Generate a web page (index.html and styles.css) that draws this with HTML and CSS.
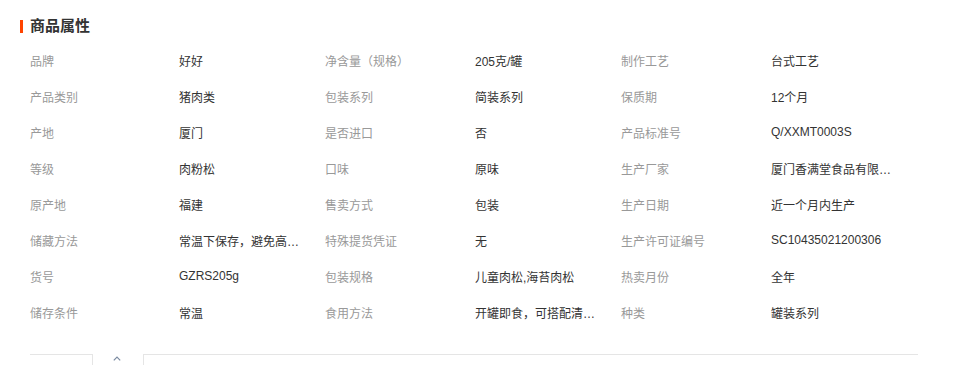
FILE: index.html
```html
<!DOCTYPE html>
<html lang="zh-CN">
<head>
<meta charset="utf-8">
<title>商品属性</title>
<link rel="stylesheet" href="styles.css">
</head>
<body>
<div class="panel">
  <h2 class="title"><span class="bar"></span>商品属性</h2>
  <div class="attrs">
    <div class="k">品牌</div><div class="v">好好</div>
    <div class="k">净含量（规格）</div><div class="v">205克/罐</div>
    <div class="k">制作工艺</div><div class="v">台式工艺</div>

    <div class="k">产品类别</div><div class="v">猪肉类</div>
    <div class="k">包装系列</div><div class="v">简装系列</div>
    <div class="k">保质期</div><div class="v">12个月</div>

    <div class="k">产地</div><div class="v">厦门</div>
    <div class="k">是否进口</div><div class="v">否</div>
    <div class="k">产品标准号</div><div class="v">Q/XXMT0003S</div>

    <div class="k">等级</div><div class="v">肉粉松</div>
    <div class="k">口味</div><div class="v">原味</div>
    <div class="k">生产厂家</div><div class="v">厦门香满堂食品有限…</div>

    <div class="k">原产地</div><div class="v">福建</div>
    <div class="k">售卖方式</div><div class="v">包装</div>
    <div class="k">生产日期</div><div class="v">近一个月内生产</div>

    <div class="k">储藏方法</div><div class="v">常温下保存，避免高…</div>
    <div class="k">特殊提货凭证</div><div class="v">无</div>
    <div class="k">生产许可证编号</div><div class="v">SC10435021200306</div>

    <div class="k">货号</div><div class="v">GZRS205g</div>
    <div class="k">包装规格</div><div class="v">儿童肉松,海苔肉松</div>
    <div class="k">热卖月份</div><div class="v">全年</div>

    <div class="k">储存条件</div><div class="v">常温</div>
    <div class="k">食用方法</div><div class="v">开罐即食，可搭配清…</div>
    <div class="k">种类</div><div class="v">罐装系列</div>
  </div>
  <div class="foot">
    <div class="seg left"></div>
    <div class="toggle">
      <svg width="8" height="5" viewBox="0 0 8 5"><path d="M0.8 4.4 L4 1.2 L7.2 4.4" fill="none" stroke="#7a8aa0" stroke-width="1.2"/></svg>
    </div>
    <div class="seg right"></div>
  </div>
</div>
</body>
</html>
```

FILE: styles.css
```css
html, body {
  margin: 0;
  padding: 0;
  background: #fff;
}
body {
  font-family: "Liberation Sans", "Noto Sans CJK SC", sans-serif;
  font-size: 12px;
  color: #333;
}
.panel {
  padding: 17px 37px 0 20px;
}
.title {
  margin: 0;
  display: flex;
  align-items: center;
  gap: 7px;
  height: 18px;
  font-size: 15px;
  font-weight: bold;
  color: #333;
  line-height: 18px;
}
.bar {
  display: block;
  width: 3px;
  height: 13px;
  background: #ff4400;
}
.attrs {
  margin-top: 7px;
  margin-left: 10px;
  display: grid;
  grid-template-columns: 149px 146px 150px 146px 150px 1fr;
  grid-auto-rows: 36px;
  align-items: center;
}
.k {
  color: #999;
  white-space: nowrap;
}
.v {
  color: #333;
  white-space: nowrap;
}
.foot {
  margin: 24px 0 0 10px;
  display: flex;
  height: 11px;
}
.seg {
  border-top: 1px solid #e5e5e5;
}
.left {
  width: 62px;
  border-right: 1px solid #e5e5e5;
}
.right {
  flex: 1;
  border-left: 1px solid #e5e5e5;
}
.toggle {
  width: 50px;
  display: flex;
  justify-content: center;
  padding-top: 2px;
  box-sizing: border-box;
}
.toggle svg {
  display: block;
  margin-left: -2px;
}
```
